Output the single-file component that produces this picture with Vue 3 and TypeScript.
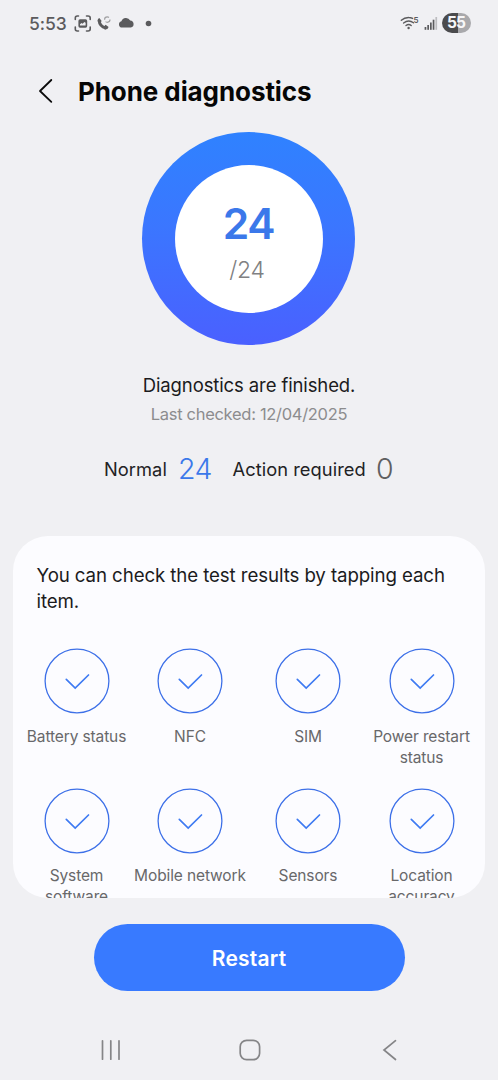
<script setup lang="ts">
interface TestItem {
  label: string
}

const total: number = 24
const actionRequired: number = 0

const tests: TestItem[] = [
  { label: 'Battery status' },
  { label: 'NFC' },
  { label: 'SIM' },
  { label: 'Power restart\nstatus' },
  { label: 'System\nsoftware' },
  { label: 'Mobile network' },
  { label: 'Sensors' },
  { label: 'Location\naccuracy' },
]
</script>

<template>
  <div class="screen">
    <div class="statusbar">
      <span class="clock">5:53</span>
      <svg class="left-icons" width="82" height="20" viewBox="0 0 82 20">
        <g fill="none" stroke="#5b5b5d" stroke-width="1.6" stroke-linecap="round">
          <path d="M2.300 6.500V5Q2.300 3 4.300 3H5.500M13.500 3h1.500Q17.200 3 17.200 5v1.500M17.200 14v2q0 2-2.200 2H13.500M5.500 18H4.300Q2.300 18 2.300 16v-2" />
        </g>
        <path fill-rule="evenodd" fill="#5b5b5d" d="M7 6.300h5.600q1.600 0 1.600 1.600v5.200q0 1.600-1.600 1.600H7q-1.600 0-1.600-1.600V7.900q0-1.600 1.600-1.600zM7 12.600h5.600V9.800l-1.100-.9-2 1.900-1-.8L7 11.300z" />
        <path d="M26 7.200q.4 6.200 7 8" fill="none" stroke="#5b5b5d" stroke-width="2.800" />
        <path d="M24.600 8.300q-.1-2.800 1.700-3.300l2.400 2.900-1.600 2zM31 13.500l1.600-1.700 3 2.200q-.8 2.800-4 2.500z" fill="#5b5b5d" />
        <circle cx="34.300" cy="6.600" r="2.700" fill="none" stroke="#a0a0a2" stroke-width="1.200" stroke-dasharray="6 2.200" />
        <path d="M49 14.600a3.200 3.200 0 0 1-.6-6.300 4.800 4.800 0 0 1 8.800-.8 3.600 3.600 0 0 1 .6 7.100z" fill="#5b5b5d" />
        <circle cx="75.500" cy="10.500" r="2.800" fill="#5b5b5d" />
      </svg>
      <span class="spacer"></span>
      <svg class="right-icons" width="40" height="20" viewBox="0 0 40 20">
        <g fill="none" stroke="#5b5b5d" stroke-width="1.400" stroke-linecap="round">
          <path d="M1.300 7.300Q4.500 4.400 8.800 4.500q2 0 3.800.9M3.600 10q5-4 9.900-.2M6 12.500q2.700-2 5.200 0" />
        </g>
        <circle cx="8.600" cy="15" r="1.200" fill="#5b5b5d" />
        <text x="13.500" y="9.600" class="band">5</text>
        <g fill="#5b5b5d">
          <rect x="24.600" y="14" width="1.700" height="2.800" />
          <rect x="27.300" y="12" width="1.700" height="4.800" />
          <rect x="30" y="9.500" width="1.700" height="7.300" />
          <rect x="32.700" y="6.700" width="1.700" height="10.100" />
          <rect x="35.400" y="4" width="1.700" height="12.800" fill="#bdbdc0" />
        </g>
      </svg>
      <span class="battery">55</span>
    </div>

    <header class="header">
      <svg class="back" width="16" height="28" viewBox="0 0 16 28">
        <path d="M13.300 3L2 14l11.300 10.800" fill="none" stroke="#0b0b0b" stroke-width="1.800" stroke-linecap="round" stroke-linejoin="round" />
      </svg>
      <h1>Phone diagnostics</h1>
    </header>

    <section class="summary">
      <div class="ring">
        <div class="ring-core">
          <span class="done">{{ total }}</span>
          <span class="of">/{{ total }}</span>
        </div>
      </div>
      <p class="finished">Diagnostics are finished.</p>
      <p class="checked">Last checked: 12/04/2025</p>
      <div class="counts">
        <span class="cap normal">Normal</span>
        <span class="num blue">{{ total }}</span>
        <span class="cap action">Action required</span>
        <span class="num zero">{{ actionRequired }}</span>
      </div>
    </section>

    <section class="card">
      <p class="hint">You can check the test results by tapping each item.</p>
      <div class="grid">
        <div v-for="test in tests" :key="test.label" class="test">
          <svg width="66" height="66" viewBox="0 0 66 66" fill="none" stroke="#3d70e8">
            <circle cx="33" cy="33" r="31.900" stroke-width="1.300" />
            <path d="M22.300 31.300L31.200 40 44.500 27" stroke="#3f7bf2" stroke-width="1.700" stroke-linecap="round" />
          </svg>
          <span class="label">{{ test.label }}</span>
        </div>
      </div>
    </section>

    <button class="restart">Restart</button>

    <nav class="navbar">
      <svg width="22" height="24" viewBox="0 0 22 24" stroke="#858587" stroke-width="1.700" stroke-linecap="round">
        <path d="M2.500 2.800v18.400M10.800 2.800v18.400M19 2.800v18.400" />
      </svg>
      <svg class="home" width="24" height="24" viewBox="0 0 24 24" fill="none" stroke="#858587" stroke-width="1.700">
        <rect x="2.200" y="2.300" width="19.400" height="19.400" rx="6.500" />
      </svg>
      <svg width="16" height="24" viewBox="0 0 16 24" fill="none" stroke="#858587" stroke-width="1.700" stroke-linecap="round">
        <path d="M13.500 2.700L2 12l11.500 9.500" />
      </svg>
    </nav>
  </div>
</template>

<style>
body {
  margin: 0;
  background: #f0f0f3;
}
</style>

<style scoped>
.screen {
  width: 498px;
  height: 1080px;
  overflow: hidden;
  background: #f0f0f3;
  font-family: Inter, "Liberation Sans", sans-serif;
  display: flex;
  flex-direction: column;
  align-items: center;
}
.statusbar {
  box-sizing: border-box;
  width: 100%;
  height: 46px;
  padding: 0 27px 0 29px;
  display: flex;
  align-items: center;
  flex: none;
}
.clock {
  width: 44px;
  font-size: 17.5px;
  font-weight: 500;
  letter-spacing: -0.100px;
  color: #5b5b5d;
}
.spacer {
  flex: 1;
}
.right-icons {
  margin-right: 2px;
}
.band {
  font-size: 8px;
  font-weight: 600;
  fill: #5b5b5d;
}
.battery {
  box-sizing: border-box;
  width: 29px;
  height: 20px;
  padding-right: 1px;
  line-height: 20px;
  border-radius: 10px;
  background: linear-gradient(90deg, #4b4b4d 55%, #a9a9ac 55%);
  color: #f7f7f8;
  font-size: 15.500px;
  font-weight: 700;
  letter-spacing: -1px;
  text-align: center;
}
.header {
  width: 100%;
  height: 86px;
  flex: none;
  display: flex;
  align-items: center;
}
.back {
  margin: 3px 0 0 38px;
}
h1 {
  margin: 5px 0 0 24px;
  font-size: 26px;
  line-height: 36px;
  font-weight: 700;
  color: #060606;
  letter-spacing: -0.080px;
  white-space: nowrap;
}
.summary {
  display: flex;
  flex-direction: column;
  align-items: center;
  height: 403.500px;
  width: 100%;
  flex: none;
}
.ring {
  width: 213px;
  height: 213px;
  margin-right: 1px;
  border-radius: 50%;
  background: linear-gradient(180deg, #2f82ff, #3b76ff 45%, #4a60ff);
  display: flex;
  align-items: center;
  justify-content: center;
}
.ring-core {
  box-sizing: border-box;
  width: 148px;
  height: 148px;
  padding-top: 34px;
  border-radius: 50%;
  background: #fff;
  display: flex;
  flex-direction: column;
  align-items: center;
}
.done {
  font-size: 42.500px;
  line-height: 50px;
  font-weight: 600;
  letter-spacing: -1.200px;
  color: #3b78ea;
}
.of {
  margin: 6px 3px 0 0;
  font-size: 23px;
  line-height: 30px;
  font-weight: 300;
  letter-spacing: -0.200px;
  color: #808082;
}
p {
  margin: 0;
}
.finished {
  margin-top: 28px;
  font-size: 18.500px;
  line-height: 25px;
  letter-spacing: -0.110px;
  color: #1b1b1d;
}
.checked {
  margin-top: 4px;
  font-size: 16.500px;
  line-height: 25px;
  letter-spacing: -0.300px;
  color: #8c8c8e;
}
.counts {
  width: 100%;
  height: 40px;
  margin-top: 22px;
  display: flex;
  align-items: center;
}
.cap {
  font-size: 18.300px;
  line-height: 40px;
  color: #222224;
  letter-spacing: 0.050px;
  white-space: nowrap;
}
.normal {
  width: 74px;
  margin-left: 104px;
}
.num {
  font-size: 28.500px;
  line-height: 40px;
  font-weight: 350;
  letter-spacing: -0.500px;
}
.blue {
  width: 54.500px;
  color: #3b78ea;
}
.action {
  width: 143.500px;
}
.zero {
  color: #5f5f61;
}
.card {
  box-sizing: border-box;
  width: 472px;
  height: 362.500px;
  padding: 27px 9px 0;
  border-radius: 35px;
  background: #fcfcff;
  overflow: hidden;
  flex: none;
}
.hint {
  width: 430px;
  margin-left: 14.500px;
  font-size: 18.700px;
  line-height: 26px;
  letter-spacing: -0.100px;
  color: #1b1b1d;
}
.grid {
  margin-top: 33.500px;
  display: grid;
  grid-template-columns: 109px 118px 118px 109px;
  grid-auto-rows: 139.500px;
}
.test {
  display: flex;
  flex-direction: column;
  align-items: center;
}
.test svg {
  flex: none;
}
.label {
  margin-top: 11.500px;
  font-size: 15.500px;
  line-height: 21.200px;
  color: #68686a;
  text-align: center;
  white-space: pre;
  letter-spacing: -0.120px;
}
.restart {
  width: 311px;
  height: 67px;
  margin: 26px 0 0;
  padding: 2px 0 0;
  border: 0;
  border-radius: 34px;
  background: #387aff;
  color: #fff;
  font-family: inherit;
  font-size: 21px;
  font-weight: 600;
  letter-spacing: 0.200px;
  flex: none;
}
.navbar {
  box-sizing: border-box;
  width: 298px;
  margin-top: 47px;
  display: flex;
  justify-content: space-between;
  align-items: center;
}
.home {
  margin-right: 4px;
}
</style>
